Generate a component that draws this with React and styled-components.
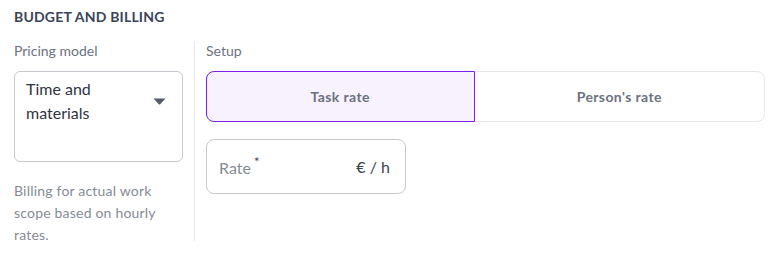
import React, { useState } from 'react';
import styled, { createGlobalStyle } from 'styled-components';

const GlobalStyle = createGlobalStyle`
  html, body {
    margin: 0;
    padding: 0;
    background: #ffffff;
  }
  body {
    font-family: Lato, "Open Sans", "Noto Sans", sans-serif;
    color: #3d4451;
  }
`;

const Section = styled.section`
  padding: 8px 14px 0 14px;
  width: 751px;
`;

const SectionTitle = styled.h2`
  margin: 0;
  font-size: 14px;
  font-weight: 700;
  letter-spacing: 0.2px;
  color: #3b4456;
  line-height: 18px;
`;

const Columns = styled.div`
  display: grid;
  grid-template-columns: 181px 1fr;
  margin-top: 15px;
`;

const LeftColumn = styled.div`
  box-sizing: border-box;
  height: 200px;
  padding-right: 11px;
  border-right: 1px solid #e6e7ea;
`;

const RightColumn = styled.div`
  padding-left: 11px;
`;

const FieldLabel = styled.div`
  font-size: 14px;
  line-height: 20px;
  color: #6b7280;
  margin-bottom: 10px;
`;

const SelectBox = styled.div`
  box-sizing: border-box;
  height: 91px;
  border: 1px solid #c6c8cd;
  border-radius: 6px;
  padding: 5px 16px 0 11px;
  display: flex;
  justify-content: space-between;
  align-items: flex-start;
`;

const SelectValue = styled.div`
  font-size: 16px;
  line-height: 24px;
  color: #2f3542;
`;

const Caret = styled.svg`
  margin-top: 21px;
  flex-shrink: 0;
`;

const HelpText = styled.p`
  margin: 18px 0 0 0;
  font-size: 14px;
  letter-spacing: 0.2px;
  line-height: 22px;
  color: #868b96;
  padding-right: 8px;
`;

const Segmented = styled.div`
  display: flex;
  height: 51px;
  border: 1px solid #e6e7ea;
  border-radius: 8px;
  box-sizing: border-box;
`;

const Segment = styled.button`
  flex: ${p => p.$grow};
  box-sizing: border-box;
  margin: ${p => (p.$active ? '-1px 0 -1px -1px' : '0')};
  border: ${p => (p.$active ? '1px solid #7b1fe8' : 'none')};
  border-radius: ${p => (p.$active ? '8px 0 0 8px' : '0 8px 8px 0')};
  background: ${p => (p.$active ? '#f7f2fe' : 'transparent')};
  font-family: inherit;
  font-size: 14px;
  letter-spacing: 0.4px;
  font-weight: 700;
  color: #6b7180;
  cursor: pointer;
  padding: 0;
`;

const RateInput = styled.div`
  margin-top: 17px;
  box-sizing: border-box;
  width: 200px;
  height: 55px;
  border: 1px solid #c6c8cd;
  border-radius: 8px;
  display: flex;
  align-items: center;
  justify-content: space-between;
  padding: 0 15px 0 12px;
`;

const Placeholder = styled.span`
  font-size: 16px;
  color: #868b96;
`;

const Required = styled.sup`
  font-size: 13px;
  margin-left: 3px;
  position: relative;
  top: -1px;
  color: #3d4451;
`;

const Unit = styled.span`
  font-size: 16px;
  color: #3d4451;
`;

export default function App() {
  const [mode, setMode] = useState('task');

  return (
    <>
      <GlobalStyle />
      <Section>
        <SectionTitle>BUDGET AND BILLING</SectionTitle>
        <Columns>
          <LeftColumn>
            <FieldLabel>Pricing model</FieldLabel>
            <SelectBox>
              <SelectValue>Time and<br />materials</SelectValue>
              <Caret width="13" height="7" viewBox="0 0 13 7">
                <path d="M0.5 0.5 H12.5 L7.2 6.2 Q6.5 6.9 5.8 6.2 Z" fill="#555b66" />
              </Caret>
            </SelectBox>
            <HelpText>Billing for actual work scope based on hourly rates.</HelpText>
          </LeftColumn>
          <RightColumn>
            <FieldLabel>Setup</FieldLabel>
            <Segmented>
              <Segment $grow="267" $active={mode === 'task'} onClick={() => setMode('task')}>
                Task rate
              </Segment>
              <Segment $grow="290" $active={mode === 'person'} onClick={() => setMode('person')}>
                Person's rate
              </Segment>
            </Segmented>
            <RateInput>
              <Placeholder>Rate<Required>*</Required></Placeholder>
              <Unit>€ / h</Unit>
            </RateInput>
          </RightColumn>
        </Columns>
      </Section>
    </>
  );
}
